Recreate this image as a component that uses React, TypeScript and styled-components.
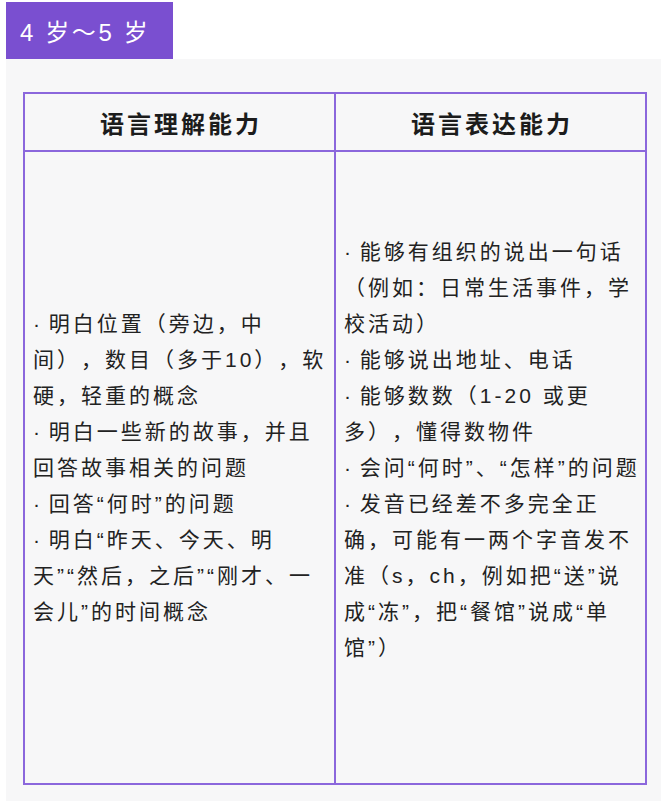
import React from "react";
import styled, { createGlobalStyle } from "styled-components";

const GlobalStyle = createGlobalStyle`
  html, body {
    margin: 0;
    padding: 0;
    background: #ffffff;
  }
  body {
    font-family: "Liberation Sans", "Noto Sans CJK SC", sans-serif;
    color: #222222;
    text-spacing-trim: space-all;
  }
`;

const Page = styled.div`
  padding: 2px 0 0 6px;
`;

const AgeTag = styled.div`
  display: inline-flex;
  align-items: center;
  height: 57px;
  padding: 0 0 0 14px;
  background: #7a4fd0;
  color: #ffffff;
  font-size: 24px;
  letter-spacing: 2.6px;
  box-sizing: border-box;
  width: 167px;
`;

const Panel = styled.section`
  background: #f7f7f8;
  padding: 33px 14px 16px 17px;
`;

const Table = styled.div`
  display: grid;
  grid-template-columns: minmax(0, 1fr) minmax(0, 1fr);
  grid-template-rows: 58px 633px;
  border-top: 2px solid #8b67dc;
  border-left: 2px solid #8b67dc;
`;

const HeadCell = styled.div`
  display: flex;
  align-items: center;
  justify-content: center;
  padding-left: 3px;
  border-right: 2px solid #8b67dc;
  border-bottom: 2px solid #8b67dc;
  font-size: 24px;
  font-weight: 700;
  letter-spacing: 3px;
  color: #1c1c1c;
`;

const BodyCell = styled.div`
  display: flex;
  flex-direction: column;
  justify-content: center;
  padding: 0 8px;
  border-right: 2px solid #8b67dc;
  border-bottom: 2px solid #8b67dc;
  font-size: 21px;
  line-height: 36px;
  letter-spacing: 3px;
  color: #222222;
  overflow: hidden;
  text-spacing-trim: space-all;
`;

const Item = styled.p`
  margin: 0;
`;

const Line = styled.span`
  display: block;
  white-space: nowrap;
  height: 36px;
`;

const Bullet = styled.span`
  letter-spacing: 0;
  padding-right: 3px;
`;

const understanding: string[][] = [
  ["· 明白位置（旁边，中", "间），数目（多于10），软", "硬，轻重的概念"],
  ["· 明白一些新的故事，并且", "回答故事相关的问题"],
  ["· 回答“何时”的问题"],
  ["· 明白“昨天、今天、明", "天”“然后，之后”“刚才、一", "会儿”的时间概念"],
];

const expression: string[][] = [
  ["· 能够有组织的说出一句话", "（例如：日常生活事件，学", "校活动）"],
  ["· 能够说出地址、电话"],
  ["· 能够数数（1-20 或更", "多），懂得数物件"],
  ["· 会问“何时”、“怎样”的问题"],
  [
    "· 发音已经差不多完全正",
    "确，可能有一两个字音发不",
    "准（s，ch，例如把“送”说",
    "成“冻”，把“餐馆”说成“单",
    "馆”）",
  ],
  [""],
];

const renderLine = (l: string) =>
  l.startsWith("· ") ? (
    <>
      <Bullet>· </Bullet>
      {l.slice(2)}
    </>
  ) : (
    l
  );

const renderItems = (items: string[][]) =>
  items.map((lines, i) => (
    <Item key={i}>
      {lines.map((l, j) => (
        <Line key={j}>{renderLine(l)}</Line>
      ))}
    </Item>
  ));

export default function App() {
  return (
    <>
      <GlobalStyle />
      <Page>
        <AgeTag>4 岁～5 岁</AgeTag>
        <Panel>
          <Table>
            <HeadCell>语言理解能力</HeadCell>
            <HeadCell>语言表达能力</HeadCell>
            <BodyCell>{renderItems(understanding)}</BodyCell>
            <BodyCell>{renderItems(expression)}</BodyCell>
          </Table>
        </Panel>
      </Page>
    </>
  );
}
